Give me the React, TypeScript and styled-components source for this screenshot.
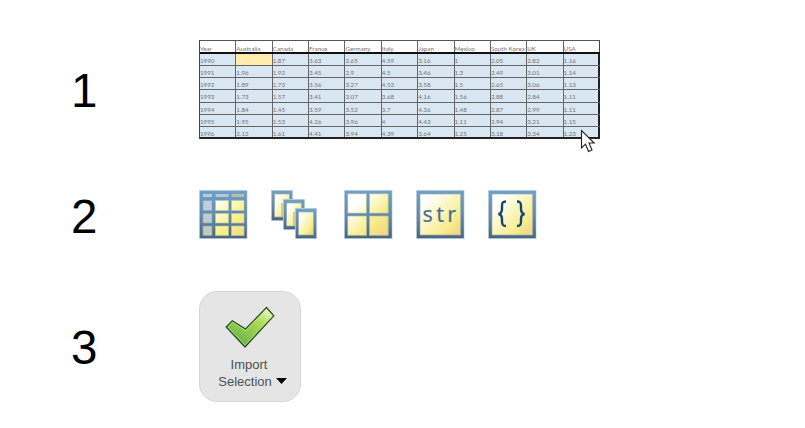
import React from "react";
import styled, { createGlobalStyle } from "styled-components";

const GlobalStyle = createGlobalStyle`
  body { margin: 0; background: #fff; overflow: hidden; }
`;

const Steps = styled.main`
  display: grid;
  grid-template-columns: 128px 1fr;
  grid-template-rows: 101px 52px 112px;
  row-gap: 49px;
  padding: 40px 0 0 71px;
  width: 805px;
  height: 428px;
  box-sizing: border-box;
  font-family: "Liberation Sans", Arial, sans-serif;
`;

const StepNumber = styled.div<{ $top: number }>`
  padding-top: ${(p) => p.$top}px;
  font-size: 47.5px;
  line-height: 54px;
  color: #000;
`;

const SheetWrap = styled.div`
  position: relative;
  width: 401px;
  height: 98px;
`;

const Sheet = styled.table`
  border-collapse: separate;
  border-spacing: 0;
  display: grid;
  grid-template-rows: 13px repeat(7, 12.14px);
  width: 401px;
  height: 99px;
  box-sizing: border-box;
  border-top: 1px solid #555;
  border-left: 1px solid #444;
  font-family: Lato, "Open Sans", sans-serif;
  font-size: 6.25px;
  color: #747474;

  thead, tbody { display: contents; }
`;

const Row = styled.tr<{ $head?: boolean }>`
  display: grid;
  grid-template-columns: repeat(10, 36.36px) 36.4px;
  background: ${(p) => (p.$head ? "#fff" : "#d9e7f3")};
  box-sizing: border-box;
  border-bottom: ${(p) => (p.$head ? "2px solid #111" : "1px solid #666")};
  &:last-child:not(:first-child) { border-bottom: 2px solid #222; }
`;

const Cell = styled.td<{ $empty?: boolean }>`
  box-sizing: border-box;
  padding: 3px 0 0;
  line-height: 8px;
  height: 100%;
  min-height: 0;
  white-space: nowrap;
  border-right: 1px solid #666;
  background: ${(p) => (p.$empty ? "#ffebad" : "transparent")};
  &:last-child { border-right: 2px solid #222; }
`;

const HeadCell = styled(Cell).attrs({ as: "th" })`
  padding-top: 4px;
  font-weight: 400;
  text-align: left;
  &:last-child { border-right: 1px solid #444; }
`;

const Pointer = styled.svg`
  position: absolute;
  left: 381px;
  top: 89px;
  width: 16px;
  height: 24px;
`;

const TypeIcons = styled.div`
  display: grid;
  grid-template-columns: repeat(5, 49px);
  column-gap: 23.25px;
  align-items: start;
`;

const TypeIcon = styled.svg`
  display: block;
  width: 49px;
  height: 49px;
  overflow: visible;
`;

const ImportButton = styled.button`
  display: flex;
  flex-direction: column;
  align-items: center;
  width: 102px;
  height: 111px;
  margin: 0;
  padding: 14px 0 0;
  border: 1px solid #d6d6d6;
  border-radius: 18px;
  background: #e5e5e5;
  color: #505050;
  font: 13px/17px "Liberation Sans", Arial, sans-serif;
`;

const CheckMark = styled.svg`
  display: block;
  width: 50px;
  height: 43px;
  margin-bottom: 7px;
`;

const Label = styled.span`
  display: block;
  padding-right: 2px;
`;

const MenuLabel = styled.span`
  display: flex;
  align-items: center;
  gap: 4px;
  padding-left: 5px;
`;

const Caret = styled.svg`
  width: 11px;
  height: 6px;
  margin-top: -1px;
`;

const headings = ["Year", "Australia", "Canada", "France", "Germany", "Italy", "Japan", "Mexico", "South Korea", "UK", "USA"];

const rows = [
  ["1990", "", "1.87", "3.63", "2.65", "4.59", "3.16", "1", "2.05", "2.82", "1.16"],
  ["1991", "1.96", "1.92", "3.45", "2.9", "4.5", "3.46", "1.3", "2.49", "3.01", "1.14"],
  ["1992", "1.89", "1.73", "3.56", "3.27", "4.53", "3.58", "1.5", "2.65", "3.06", "1.13"],
  ["1993", "1.73", "1.57", "3.41", "3.07", "3.68", "4.16", "1.56", "2.88", "2.84", "1.11"],
  ["1994", "1.84", "1.45", "3.59", "3.52", "3.7", "4.36", "1.48", "2.87", "2.99", "1.11"],
  ["1995", "1.95", "1.53", "4.26", "3.96", "4", "4.43", "1.11", "2.94", "3.21", "1.15"],
  ["1996", "2.12", "1.61", "4.41", "3.94", "4.39", "3.64", "1.25", "3.18", "3.34", "1.23"],
];

const Gradients = () => (
  <defs>
    <linearGradient id="steel" x1="0" y1="0" x2="0" y2="1">
      <stop offset="0" stopColor="#719fc7" />
      <stop offset="0.55" stopColor="#6487a5" />
      <stop offset="1" stopColor="#4b657d" />
    </linearGradient>
    <linearGradient id="paper" x1="0" y1="0" x2="1" y2="1">
      <stop offset="0.15" stopColor="#ffffff" />
      <stop offset="0.7" stopColor="#f8ef92" />
      <stop offset="1" stopColor="#f0d27f" />
    </linearGradient>
    <linearGradient id="sheetPaper" gradientUnits="userSpaceOnUse" x1="15" y1="10" x2="46" y2="46">
      <stop offset="0" stopColor="#ffffff" />
      <stop offset="0.6" stopColor="#faf184" />
      <stop offset="1" stopColor="#f3d987" />
    </linearGradient>
    <linearGradient id="quadPaper" gradientUnits="userSpaceOnUse" x1="6" y1="5" x2="46" y2="46">
      <stop offset="0.2" stopColor="#ffffff" />
      <stop offset="0.6" stopColor="#f9ee8c" />
      <stop offset="1" stopColor="#efd07b" />
    </linearGradient>
  </defs>
);

const Frame = () => (
  <>
    <rect width="48.5" height="49" fill="#c6d7e5" />
    <rect x="0.8" y="0.8" width="47" height="47.4" fill="url(#steel)" />
  </>
);

const TableIcon = () => (
  <TypeIcon viewBox="0 0 49 49" aria-label="Table">
    <Gradients />
    <Frame />
    {[
      [4, 9, "#b8cbe0"],
      [16.5, 13, "#b5c7d8"],
      [32.5, 12.5, "#b6c2a3"],
    ].map(([x, w, color]) => (
      <rect key={x} x={x} y="4" width={w} height="3" fill={String(color)} />
    ))}
    {[
      [10.5, 10, "#bdcfe7"],
      [23.5, 9.5, "#c0ccd0"],
      [36, 9.5, "#c2ccb4"],
    ].map(([y, h, color]) => (
      <g key={y} strokeWidth="0.7">
        <rect x="4" y={y} width="9" height={h} fill={String(color)} stroke="#88a9ba" />
        <rect x="16.5" y={y} width="13" height={h} fill="url(#sheetPaper)" stroke="#b9c9ab" />
        <rect x="32.5" y={y} width="12.5" height={h} fill="url(#sheetPaper)" stroke="#b9c9ab" />
      </g>
    ))}
  </TypeIcon>
);

const ColumnsIcon = () => (
  <TypeIcon viewBox="0 0 49 49" aria-label="Column vectors">
    {[[0, 0], [12, 9], [24, 18]].map(([x, y], i) => (
      <g key={x} transform={`translate(${x} ${y})`}>
        <rect width="22" height="31" fill="#bfd2e1" />
        <rect x="0.8" y="0.8" width="20.4" height="29.4" fill="url(#steel)" />
        <rect x="3.5" y="4" width="15" height="23" fill="url(#paper)" stroke="#98adb0" strokeWidth="0.7" />
        {i < 2 && <rect x="10" y="13" width="3" height="14" fill="#aaa982" opacity="0.5" />}
      </g>
    ))}
  </TypeIcon>
);

const MatrixIcon = () => (
  <TypeIcon viewBox="0 0 49 49" aria-label="Numeric matrix">
    <Frame />
    {[3.8, 26].flatMap((y) =>
      [3.8, 25.5].map((x) => (
        <rect key={`${x}-${y}`} x={x} y={y} width="18.7" height="19.3" fill="url(#quadPaper)" stroke="#a9bca8" strokeWidth="0.7" />
      )),
    )}
  </TypeIcon>
);

const StringIcon = () => (
  <TypeIcon viewBox="0 0 49 49" aria-label="String array">
    <Frame />
    <rect x="4" y="4" width="40.7" height="41" fill="url(#paper)" stroke="#94aeb6" strokeWidth="0.7" />
    <text x="6.5" y="32.3" fontFamily="Noto Sans, sans-serif" fontSize="21.5" letterSpacing="3.4" fill="#4b708d" stroke="#4b708d" strokeWidth="0.2">str</text>
  </TypeIcon>
);

const CellIcon = () => (
  <TypeIcon viewBox="0 0 49 49" aria-label="Cell array">
    <Frame />
    <rect x="4" y="4" width="40.7" height="41" fill="url(#paper)" stroke="#94aeb6" strokeWidth="0.7" />
    <g fill="none" stroke="#174475" strokeWidth="2.4">
      <path d="M18 11.5C14.5 11.5 14 13 14 16V19C14 22 13 23.5 10.5 24C13 24.5 14 26 14 29V31.5C14 35 15 36 18 36" />
      <path d="M29 11.5C32.5 11.5 33 13 33 16V19C33 22 34 23.5 36.5 24C34 24.5 33 26 33 29V31.5C33 35 32 36 29 36" />
    </g>
  </TypeIcon>
);

export default function App() {
  return (
    <>
      <GlobalStyle />
      <Steps>
        <StepNumber $top={24}>1</StepNumber>
        <SheetWrap>
          <Sheet>
            <thead>
              <Row $head>{headings.map((name) => <HeadCell key={name}>{name}</HeadCell>)}</Row>
            </thead>
            <tbody>
              {rows.map((row) => (
                <Row key={row[0]}>{row.map((value, i) => <Cell key={i} $empty={!value}>{value}</Cell>)}</Row>
              ))}
            </tbody>
          </Sheet>
          <Pointer viewBox="0 0 16 24">
            <path d="M1.5 1.5V19L5.5 15.2L8.6 22.5L12 21L9 14H14.2Z" fill="#fff" stroke="#222" strokeWidth="1.1" />
          </Pointer>
        </SheetWrap>

        <StepNumber $top={0}>2</StepNumber>
        <TypeIcons>
          <TableIcon />
          <ColumnsIcon />
          <MatrixIcon />
          <StringIcon />
          <CellIcon />
        </TypeIcons>

        <StepNumber $top={30}>3</StepNumber>
        <ImportButton>
          <CheckMark viewBox="0 0 50 43">
            <defs>
              <linearGradient id="leaf" x1="0.85" y1="0.05" x2="0.25" y2="0.9">
                <stop offset="0" stopColor="#e7f8b5" />
                <stop offset="0.35" stopColor="#acd957" />
                <stop offset="1" stopColor="#6cb445" />
              </linearGradient>
            </defs>
            <path d="M1.2 21L7.3 14.7L20.5 23L41.5 1.5L48.8 9.8L20 41Z" fill="url(#leaf)" stroke="#244d20" strokeWidth="1.2" />
            <path d="M3 21L7.5 16.5L20.6 24.7L41.4 3.4L47 9.8L20 39Z" fill="none" stroke="#caec95" strokeWidth="0.8" opacity="0.8" />
          </CheckMark>
          <Label>Import</Label>
          <MenuLabel>
            Selection
            <Caret viewBox="0 0 11 6"><path d="M0 0H11L5.5 6Z" fill="#000" /></Caret>
          </MenuLabel>
        </ImportButton>
      </Steps>
    </>
  );
}
